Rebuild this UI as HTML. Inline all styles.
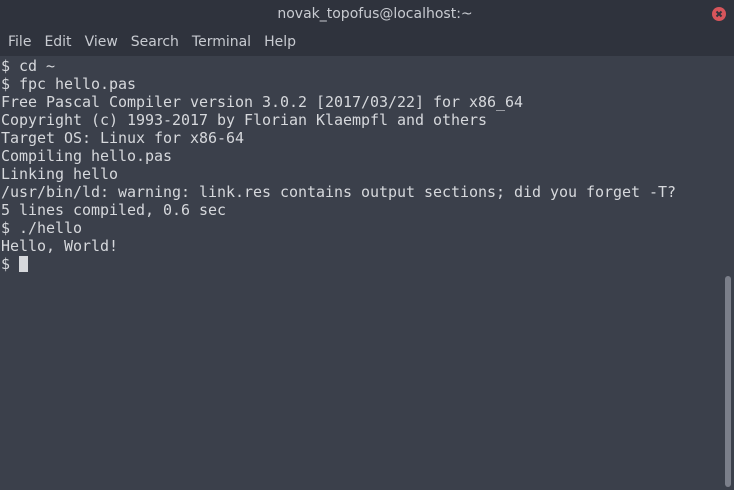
<html><head><style>
body{margin:0;width:734px;height:490px;background:#3b404b;overflow:hidden;font-family:"DejaVu Sans",sans-serif}
#hd{position:absolute;left:0;top:0;width:734px;height:56px;background:#2f333d}
#t{position:absolute;top:6px;left:8px;width:734px;text-align:center;color:#c8cbd1;font-size:14px}
#x{position:absolute;left:712px;top:7px;width:14px;height:14px;border-radius:50%;background:#d7555b}
#m{position:absolute;top:34px;left:8px;color:#c8cbd1;font-size:14px;word-spacing:0}
#m span{margin-right:13px}
pre{position:absolute;left:1px;top:57px;margin:0;font:15px/18px "DejaVu Sans Mono",monospace;letter-spacing:-0.03px;color:#d6d8dc}
#c{display:inline-block;width:9px;height:16px;background:#d6d8dc;vertical-align:-3px}
#sb{position:absolute;left:725px;top:276px;width:6px;height:211px;border-radius:3px;background:#7b7f8a}
</style></head><body>
<div id="hd"><div id="t">novak_topofus@localhost:~</div><div id="x"><svg width="14" height="14"><path d="M4.5 4.5L9.5 9.5M9.5 4.5L4.5 9.5" stroke="#2f333d" stroke-width="2"/></svg></div>
<div id="m"><span>File</span><span>Edit</span><span>View</span><span>Search</span><span>Terminal</span><span>Help</span></div></div>
<pre>$ cd ~
$ fpc hello.pas
Free Pascal Compiler version 3.0.2 [2017/03/22] for x86_64
Copyright (c) 1993-2017 by Florian Klaempfl and others
Target OS: Linux for x86-64
Compiling hello.pas
Linking hello
/usr/bin/ld: warning: link.res contains output sections; did you forget -T?
5 lines compiled, 0.6 sec
$ ./hello
Hello, World!
$ <span id="c"></span></pre>
<div id="sb"></div>
</body></html>
